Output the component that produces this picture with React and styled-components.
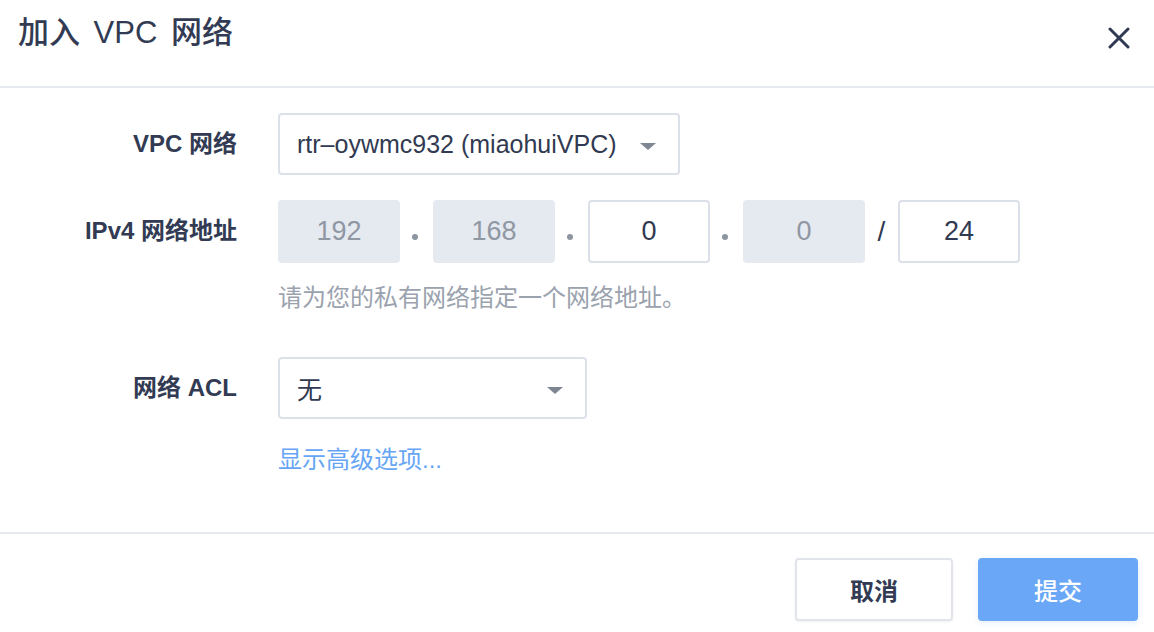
import React from "react";
import styled, { createGlobalStyle } from "styled-components";

const GlobalStyle = createGlobalStyle`
  * { box-sizing: border-box; }
  html, body { margin: 0; padding: 0; background: #ffffff; }
  body {
    font-family: "Liberation Sans", "Noto Sans CJK SC", sans-serif;
    color: #313a51;
  }
`;

const Dialog = styled.div`
  width: 1154px;
  height: 632px;
  display: flex;
  flex-direction: column;
  background: #fff;
`;

const Header = styled.div`
  height: 88px;
  flex: none;
  display: flex;
  align-items: flex-start;
  justify-content: space-between;
  padding: 17px 24px 0 18px;
  border-bottom: 2px solid #e6eaef;
`;

const Title = styled.h1`
  margin: 0;
  font-size: 31px;
  line-height: 31px;
  font-weight: 500;
  word-spacing: 5px;
  color: #323b53;
`;

const CloseButton = styled.button`
  margin-top: 10px;
  width: 22px;
  height: 22px;
  padding: 0;
  border: none;
  background: transparent;
  display: flex;
  align-items: center;
  justify-content: center;
  cursor: pointer;
`;

const Body = styled.div`
  flex: 1;
  padding-top: 25px;
`;

const Row = styled.div`
  display: grid;
  grid-template-columns: 237px 1fr;
  column-gap: 41px;
  align-items: start;
  margin-top: ${(p) => p.$top || 0}px;
`;

const Label = styled.div`
  text-align: right;
  line-height: 62px;
  font-size: 24px;
  font-weight: 600;
  color: #323b53;
  white-space: nowrap;
`;

const Field = styled.div`
  display: flex;
  flex-direction: column;
  align-items: flex-start;
`;

const Select = styled.div`
  width: ${(p) => p.$width}px;
  height: 62px;
  border: 2px solid #dce1e9;
  border-radius: 4px;
  display: flex;
  align-items: center;
  justify-content: space-between;
  padding: 0 22px 0 17px;
  font-size: 25px;
  color: #313a51;
  background: #fff;
`;

const Caret = styled.span`
  width: 0;
  height: 0;
  margin-top: 4px;
  border-left: 8px solid transparent;
  border-right: 8px solid transparent;
  border-top: 7px solid #7e8694;
`;

const IpGroup = styled.div`
  display: flex;
  align-items: center;
`;

const Octet = styled.div`
  width: 122px;
  height: 63px;
  border-radius: 4px;
  display: flex;
  align-items: center;
  justify-content: center;
  font-size: 27px;
  color: ${(p) => (p.$disabled ? "#8f97a3" : "#313a51")};
  background: ${(p) => (p.$disabled ? "#e5e9f0" : "#fff")};
  border: 2px solid ${(p) => (p.$disabled ? "#e5e9f0" : "#dce1e9")};
`;

const Separator = styled.div`
  width: 33px;
  height: 63px;
  display: flex;
  align-items: center;
  justify-content: center;
  font-size: 28px;
  color: #313a51;
`;

const Dot = styled.span`
  width: 6px;
  height: 6px;
  border-radius: 50%;
  background: #8d95a1;
  margin-top: 10px;
  margin-right: 4px;
`;

const Hint = styled.div`
  margin-top: 22px;
  font-size: 24px;
  line-height: 26px;
  color: #9aa2ae;
`;

const Link = styled.a`
  margin-top: 28px;
  font-size: 24px;
  line-height: 26px;
  color: #67a6f5;
  text-decoration: none;
  cursor: pointer;
`;

const Footer = styled.div`
  height: 100px;
  flex: none;
  border-top: 2px solid #e6eaef;
  display: flex;
  justify-content: flex-end;
  align-items: flex-start;
  gap: 25px;
  padding: 24px 16px 0 0;
`;

const Button = styled.button`
  height: 63px;
  width: ${(p) => (p.$primary ? 160 : 158)}px;
  border-radius: 4px;
  font-family: inherit;
  font-size: 24px;
  font-weight: ${(p) => (p.$primary ? 500 : 600)};
  cursor: pointer;
  color: ${(p) => (p.$primary ? "#ffffff" : "#323b53")};
  background: ${(p) => (p.$primary ? "#6aa8f7" : "#ffffff")};
  border: 2px solid ${(p) => (p.$primary ? "#6aa8f7" : "#e1e5eb")};
  box-shadow: ${(p) =>
    p.$primary ? "0 2px 6px rgba(106,168,247,0.18)" : "0 1px 3px rgba(0,0,0,0.06)"};
`;

export default function App() {
  const octets = [
    { v: "192", d: true },
    { v: "168", d: true },
    { v: "0", d: false },
    { v: "0", d: true },
  ];
  return (
    <>
      <GlobalStyle />
      <Dialog>
        <Header>
          <Title>加入 VPC 网络</Title>
          <CloseButton aria-label="关闭">
            <svg width="22" height="22" viewBox="0 0 22 22">
              <path
                d="M2 2 L20 20 M20 2 L2 20"
                stroke="#2f3953"
                strokeWidth="3"
                strokeLinecap="round"
              />
            </svg>
          </CloseButton>
        </Header>
        <Body>
          <Row>
            <Label>VPC 网络</Label>
            <Field>
              <Select $width={402}>
                <span>rtr–oywmc932 (miaohuiVPC)</span>
                <Caret />
              </Select>
            </Field>
          </Row>
          <Row $top={25}>
            <Label>IPv4 网络地址</Label>
            <Field>
              <IpGroup>
                {octets.map((o, i) => (
                  <React.Fragment key={i}>
                    {i > 0 && (
                      <Separator>
                        <Dot />
                      </Separator>
                    )}
                    <Octet $disabled={o.d}>{o.v}</Octet>
                  </React.Fragment>
                ))}
                <Separator>/</Separator>
                <Octet>24</Octet>
              </IpGroup>
              <Hint>请为您的私有网络指定一个网络地址。</Hint>
            </Field>
          </Row>
          <Row $top={46}>
            <Label>网络 ACL</Label>
            <Field>
              <Select $width={309}>
                <span>无</span>
                <Caret />
              </Select>
              <Link>显示高级选项...</Link>
            </Field>
          </Row>
        </Body>
        <Footer>
          <Button>取消</Button>
          <Button $primary>提交</Button>
        </Footer>
      </Dialog>
    </>
  );
}
